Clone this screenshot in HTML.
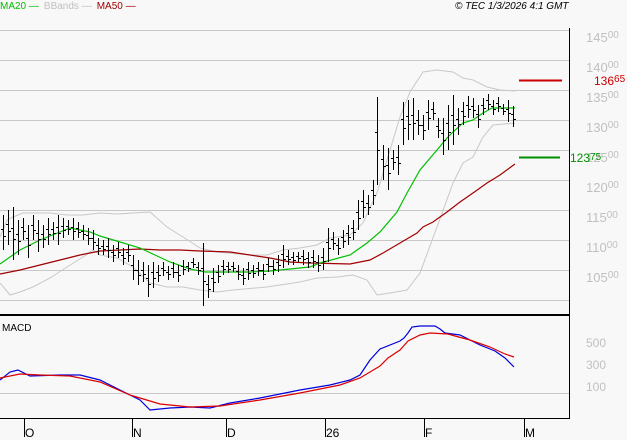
<!DOCTYPE html>
<html><head><meta charset="utf-8"><style>
body{margin:0;background:#f8f8f8;}
svg{display:block;font-family:"Liberation Sans",sans-serif;}
</style></head><body>
<svg width="627" height="440" viewBox="0 0 627 440" xmlns="http://www.w3.org/2000/svg">
<rect width="627" height="440" fill="#f8f8f8"/>
<g stroke="#c8c8c8" stroke-width="1" shape-rendering="crispEdges">
<path d="M0 30.5H569M0 60.5H569M0 90.5H569M0 120.5H569M0 150.5H569M0 180.5H569M0 210.5H569M0 240.5H569M0 270.5H569M0 300.5H569M0 393.5H569"/>
</g>
<g fill="#c0c0c0" font-size="13">
<text x="586" y="42">145<tspan font-size="10" dy="-4">00</tspan></text>
<text x="586" y="72">140<tspan font-size="10" dy="-4">00</tspan></text>
<text x="586" y="102">135<tspan font-size="10" dy="-4">00</tspan></text>
<text x="586" y="132">130<tspan font-size="10" dy="-4">00</tspan></text>
<text x="586" y="162">125<tspan font-size="10" dy="-4">00</tspan></text>
<text x="586" y="192">120<tspan font-size="10" dy="-4">00</tspan></text>
<text x="586" y="222">115<tspan font-size="10" dy="-4">00</tspan></text>
<text x="586" y="252">110<tspan font-size="10" dy="-4">00</tspan></text>
<text x="586" y="282">105<tspan font-size="10" dy="-4">00</tspan></text>
<text x="586" y="347" font-size="12">500</text>
<text x="586" y="369" font-size="12">300</text>
<text x="586" y="391" font-size="12">100</text>
</g>
<g fill="none" stroke="#c8c8c8" stroke-width="1">
<polyline points="0,237 7,220 13,217 23,213 50,213 67,215 83,215 100,213 117,214 133,213 150,212 167,227 183,237 200,248 217,252 250,255 267,255 283,250 300,248 317,245 330,238 350,235 363,223 377,193 387,160 400,117 410,92 423,72 437,70 453,72 463,78 473,80 487,87 500,90 515,91"/>
<polyline points="0,283 10,295 20,292 33,287 50,278 67,267 83,257 93,250 100,255 117,258 133,267 150,283 167,287 183,287 200,290 217,292 233,290 267,287 300,282 317,278 337,277 353,275 367,280 377,295 390,293 407,290 420,273 437,227 453,183 463,163 473,157 483,137 493,125 515,123"/>
</g>
<polyline fill="none" stroke="#a00000" stroke-width="1.2" points="0,274 20,270 40,265 60,260 80,255 100,251 120,250 140,249 160,250 180,250 200,251 230,252 250,255 270,258 290,262 310,263 350,264 370,260 383,253 400,243 417,233 423,227 433,222 447,212 460,202 473,193 487,183 500,175 515,164"/>
<polyline fill="none" stroke="#00c000" stroke-width="1.2" points="0,264 20,250 40,240 60,232 70,228 90,232 100,236 120,242 140,248 155,255 170,262 190,269 205,272 220,272 250,272 270,271 290,269 310,267 320,263 350,255 367,243 380,232 397,212 407,193 420,170 437,150 447,138 453,132 463,123 473,120 483,113 492,108 515,108"/>
<path stroke="#000" stroke-width="1" fill="none" shape-rendering="crispEdges" d="
M3.5 215V250M8.5 210V245M13.5 207V260M18.5 220V255M23.5 218V240M28.5 225V258M33.5 215V240M38.5 220V252M43.5 225V248M48.5 218V245M53.5 222V240M58.5 215V245M63.5 218V238M68.5 220V235M73.5 218V240M78.5 222V238M83.5 225V240M88.5 228V245M93.5 230V250M98.5 238V255M103.5 240V255M108.5 238V258M113.5 245V262M118.5 242V258M123.5 248V265M128.5 245V262M133.5 255V280M138.5 260V285M143.5 262V282M148.5 265V297M153.5 262V288M158.5 265V282M163.5 262V276M168.5 266V280M173.5 262V278M178.5 265V282M183.5 260V275M188.5 262V272M193.5 258V268M198.5 262V275M203.5 243V306M208.5 275V298M213.5 268V292M218.5 265V283M223.5 260V275M228.5 262V273M233.5 262V272M238.5 265V280M243.5 268V285M248.5 262V280M253.5 265V278M258.5 262V276M263.5 264V280M268.5 258V272M273.5 260V275M278.5 255V272M283.5 245V268M288.5 250V265M293.5 252V265M298.5 252V262M303.5 250V265M308.5 252V268M313.5 250V268M318.5 255V272M323.5 248V270M328.5 228V262M333.5 232V250M338.5 238V255M343.5 230V248M348.5 225V245M353.5 220V240M358.5 200V230M363.5 190V218M368.5 195V215M373.5 180V205M377.5 97V185M383.5 145V180M388.5 148V190M393.5 150V170M398.5 145V175M403.5 102V145M408.5 100V140M413.5 98V140M418.5 110V135M423.5 115V140M428.5 100V130M433.5 102V120M438.5 118V138M443.5 118V155M448.5 105V150M453.5 95V145M458.5 108V135M463.5 102V125M468.5 96V118M473.5 98V118M478.5 105V128M483.5 98V115M488.5 94V110M493.5 100V115M498.5 97V112M503.5 104V115M508.5 100V122M513.5 106V127
M1 229.5H3M4 236.5H6M6 224.5H8M9 231.5H11M11 228.5H13M14 239.5H16M16 234.5H18M19 241.5H21M21 227.5H23M24 231.5H26M26 238.5H28M29 245.5H31M31 225.5H33M34 230.5H36M36 233.5H38M39 239.5H41M41 234.5H43M44 239.5H46M46 229.5H48M49 234.5H51M51 229.5H53M54 233.5H56M56 227.5H58M59 233.5H61M61 226.5H63M64 230.5H66M66 226.5H68M69 229.5H71M71 227.5H73M74 231.5H76M76 228.5H78M79 232.5H81M81 231.5H83M84 234.5H86M86 235.5H88M89 238.5H91M91 238.5H93M94 242.5H96M96 245.5H98M99 248.5H101M101 246.5H103M104 249.5H106M106 246.5H108M109 250.5H111M111 252.5H113M114 255.5H116M116 248.5H118M119 252.5H121M121 255.5H123M124 258.5H126M126 252.5H128M129 255.5H131M131 265.5H133M134 270.5H136M136 270.5H138M139 275.5H141M141 270.5H143M144 274.5H146M146 278.5H148M149 284.5H151M151 272.5H153M154 278.5H156M156 272.5H158M159 275.5H161M161 268.5H163M164 270.5H166M166 272.5H168M169 274.5H171M171 268.5H173M174 272.5H176M176 272.5H178M179 275.5H181M181 266.5H183M184 269.5H186M186 266.5H188M189 268.5H191M191 262.5H193M194 264.5H196M196 267.5H198M199 270.5H201M201 268.5H203M204 281.5H206M206 284.5H208M209 289.5H211M211 278.5H213M214 282.5H216M216 272.5H218M219 276.5H221M221 266.5H223M224 269.5H226M226 266.5H228M229 269.5H231M231 266.5H233M234 268.5H236M236 271.5H238M239 274.5H241M241 275.5H243M244 278.5H246M246 269.5H248M249 273.5H251M251 270.5H253M254 273.5H256M256 268.5H258M259 270.5H261M261 270.5H263M264 274.5H266M266 264.5H268M269 266.5H271M271 266.5H273M274 269.5H276M276 262.5H278M279 265.5H281M281 254.5H283M284 259.5H286M286 256.5H288M289 259.5H291M291 257.5H293M294 260.5H296M296 256.5H298M299 258.5H301M301 256.5H303M304 259.5H306M306 258.5H308M309 262.5H311M311 257.5H313M314 261.5H316M316 262.5H318M319 265.5H321M321 257.5H323M324 261.5H326M326 242.5H328M329 248.5H331M331 239.5H333M334 243.5H336M336 245.5H338M339 248.5H341M341 237.5H343M344 241.5H346M346 233.5H348M349 237.5H351M351 228.5H353M354 232.5H356M356 212.5H358M359 218.5H361M361 201.5H363M364 207.5H366M366 203.5H368M369 207.5H371M371 190.5H373M374 195.5H376M375 132.5H377M378 150.5H380M381 159.5H383M384 166.5H386M386 165.5H388M389 173.5H391M391 158.5H393M394 162.5H396M396 157.5H398M399 163.5H401M401 119.5H403M404 128.5H406M406 116.5H408M409 124.5H411M411 115.5H413M414 123.5H416M416 120.5H418M419 125.5H421M421 125.5H423M424 130.5H426M426 112.5H428M429 118.5H431M431 109.5H433M434 113.5H436M436 126.5H438M439 130.5H441M441 133.5H443M444 140.5H446M446 123.5H448M449 132.5H451M451 115.5H453M454 125.5H456M456 119.5H458M459 124.5H461M461 111.5H463M464 116.5H466M466 105.5H468M469 109.5H471M471 106.5H473M474 110.5H476M476 114.5H478M479 119.5H481M481 105.5H483M484 108.5H486M486 100.5H488M489 104.5H491M491 106.5H493M494 109.5H496M496 103.5H498M499 106.5H501M501 108.5H503M504 111.5H506M506 109.5H508M509 113.5H511M511 114.5H513M514 119.5H516"/>
<polyline fill="none" stroke="#0000dd" stroke-width="1.2" points="0,380 10,372 18,370 30,376 60,375 80,375 100,380 120,390 140,400 150,410 170,408 190,407 210,408 230,403 260,398 300,390 330,385 350,380 360,375 370,360 380,349 400,341 404,338 408,333 412,327 420,326 435,326 440,329 445,333 460,335 480,345 495,351 505,358 514,367"/>
<polyline fill="none" stroke="#dd0000" stroke-width="1.2" points="0,378 20,374 40,375 70,376 100,382 130,395 160,404 190,407 220,406 260,400 300,393 340,385 360,378 370,372 380,366 388,358 400,350 408,341 420,335 430,333 448,334 455,336 470,340 490,347 505,354 514,357"/>
<g stroke="#000" shape-rendering="crispEdges">
<path d="M569.5 28V419" stroke-width="1"/>
<path d="M0 315H569" stroke-width="2"/>
<path d="M0 418.5H570" stroke-width="1"/>
<path d="M24.5 419V437M132.5 419V437M226.5 419V437M325.5 419V437M424.5 419V437M524.5 419V437" stroke-width="1"/>
</g>
<g font-size="12" fill="#000">
<text x="25" y="437">O</text><text x="133" y="437">N</text><text x="227" y="437">D</text><text x="326" y="437">26</text><text x="425" y="437">F</text><text x="525" y="437">M</text>
</g>
<text x="2" y="331" font-size="10" fill="#000">MACD</text>
<path d="M519 80.5H562" stroke="#cc0000" stroke-width="2"/>
<text x="594" y="85" font-size="12" fill="#cc0000">136<tspan font-size="10" dy="-3">65</tspan></text>
<path d="M519 157.5H560" stroke="#009000" stroke-width="2"/>
<text x="570" y="162" font-size="12" fill="#009000">123<tspan font-size="10" dy="-2">75</tspan></text>
<text x="0" y="9" font-size="10"><tspan fill="#00c000">MA20 —</tspan><tspan fill="#c0c0c0" dx="5">BBands —</tspan><tspan fill="#a00000" dx="5">MA50 —</tspan></text>
<text x="455" y="9" font-size="10" font-style="italic" fill="#000">© TEC 1/3/2026 4:1 GMT</text>
</svg>
</body></html>
